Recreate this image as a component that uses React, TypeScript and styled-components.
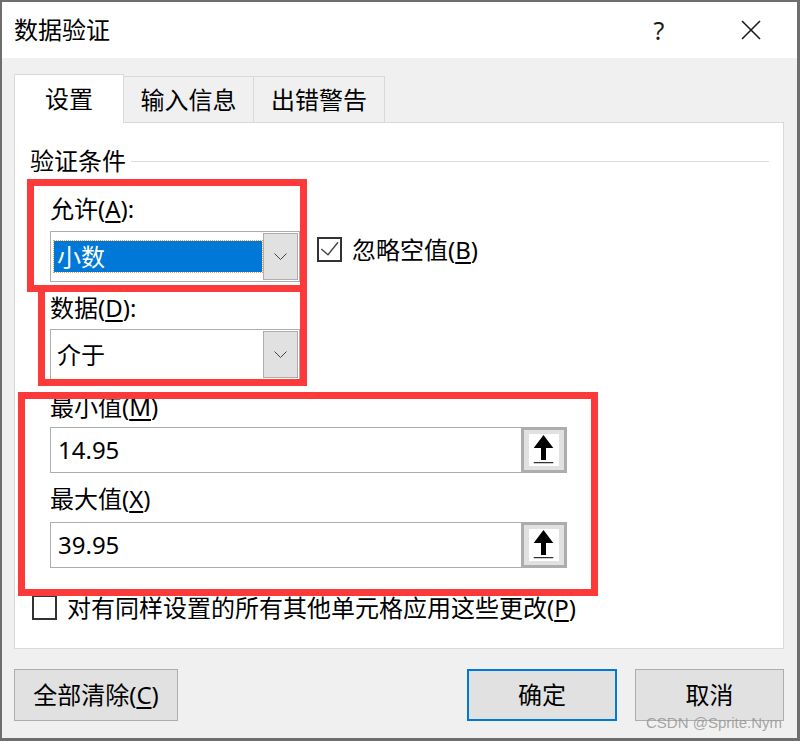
import React from 'react'
import styled, { createGlobalStyle } from 'styled-components'

const GlobalStyle = createGlobalStyle`
  html, body {
    margin: 0;
    padding: 0;
  }
  body {
    background: #6e6e6e;
    font-family: 'Noto Sans', 'Noto Sans CJK SC', sans-serif;
    color: #000;
  }
`

const ChevronIcon = () => (
  <svg width="13" height="7" viewBox="0 0 13 7">
    <polyline points="0.5,0.5 6.5,6.5 12.5,0.5" fill="none" stroke="#444" strokeWidth="1" />
  </svg>
)

const RefArrowIcon = () => (
  <svg width="30" height="32" viewBox="0 0 30 32">
    <polygon points="14.5,1 24.3,14 17,14 17,26 12,26 12,14 4.7,14" fill="#000" />
    <rect x="4.7" y="28.2" width="19.6" height="1" fill="#000" />
  </svg>
)

const CheckIcon = () => (
  <svg width="21" height="21" viewBox="0 0 21 21">
    <polyline points="2.3,10 9,15.7 19,3.3" fill="none" stroke="#444" strokeWidth="1.4" />
  </svg>
)

const CloseIcon = () => (
  <svg width="20" height="20" viewBox="0 0 20 20">
    <line x1="1" y1="1" x2="19" y2="19" stroke="#1a1a1a" strokeWidth="1.6" />
    <line x1="19" y1="1" x2="1" y2="19" stroke="#1a1a1a" strokeWidth="1.6" />
  </svg>
)

const App: React.FC = () => {
  return (
    <Page>
      <GlobalStyle />
      <Dialog>
        <TitleBar>
          <Title>数据验证</Title>
          <TitleButton>?</TitleButton>
          <TitleButton>
            <CloseIcon />
          </TitleButton>
        </TitleBar>
        <Body>
          <TabStrip>
            <Tab $active $w={110}>设置</Tab>
            <Tab $w={131}>输入信息</Tab>
            <Tab $w={132}>出错警告</Tab>
          </TabStrip>
          <Panel>
            <GroupHeader>
              <span>验证条件</span>
              <GroupLine />
            </GroupHeader>
            <Fields>
              <FieldLabel $top={24}>
                允许(<u>A</u>):
              </FieldLabel>
              <ComboRow>
                <Combo>
                  <ComboText $selected>小数</ComboText>
                  <ComboButton>
                    <ChevronIcon />
                  </ComboButton>
                </Combo>
                <CheckRow $top={6}>
                  <CheckBox>
                    <CheckIcon />
                  </CheckBox>
                  <span>
                    忽略空值(<u>B</u>)
                  </span>
                </CheckRow>
              </ComboRow>
              <FieldLabel $top={14}>
                数据(<u>D</u>):
              </FieldLabel>
              <Combo $top={9}>
                <ComboText>介于</ComboText>
                <ComboButton>
                  <ChevronIcon />
                </ComboButton>
              </Combo>
              <FieldLabel $top={15}>
                最小值(<u>M</u>)
              </FieldLabel>
              <TextBox $top={8}>
                <TextValue>14.95</TextValue>
                <RefButton>
                  <RefInner>
                    <RefArrowIcon />
                  </RefInner>
                </RefButton>
              </TextBox>
              <FieldLabel $top={14}>
                最大值(<u>X</u>)
              </FieldLabel>
              <TextBox $top={11}>
                <TextValue>39.95</TextValue>
                <RefButton>
                  <RefInner>
                    <RefArrowIcon />
                  </RefInner>
                </RefButton>
              </TextBox>
            </Fields>
            <ApplyRow>
              <CheckBox />
              <span>
                对有同样设置的所有其他单元格应用这些更改(<u>P</u>)
              </span>
            </ApplyRow>
          </Panel>
          <Footer>
            <DialogButton $w={164}>
              全部清除(<u>C</u>)
            </DialogButton>
            <DialogButton $w={150} $primary>
              确定
            </DialogButton>
            <DialogButton $w={149}>取消</DialogButton>
          </Footer>
        </Body>
      </Dialog>
      <RedFrame $x={27} $y={179} $w={280} $h={113} />
      <RedFrame $x={38} $y={285} $w={269} $h={101} />
      <RedFrame $x={18} $y={392} $w={580} $h={204} />
      <Watermark>CSDN @Sprite.Nym</Watermark>
    </Page>
  )
}

export default App

const Page = styled.div`
  position: relative;
  width: 800px;
  height: 741px;
  overflow: hidden;
  padding: 2px 3px 3px 2px;
  box-sizing: border-box;
`

const Dialog = styled.div`
  width: 795px;
  height: 736px;
  background: #f0f0f0;
  display: flex;
  flex-direction: column;
`

const TitleBar = styled.div`
  height: 56px;
  background: #fff;
  display: flex;
  align-items: center;
  padding-left: 12px;
  font-size: 24px;
  line-height: 24px;
`

const Title = styled.div`
  flex: 1;
`

const TitleButton = styled.div`
  width: 92px;
  height: 56px;
  display: flex;
  align-items: center;
  justify-content: center;
  color: #1a1a1a;
  font-size: 25px;
`

const Body = styled.div`
  display: flex;
  flex-direction: column;
  padding: 0 13px 0 12px;
`

const TabStrip = styled.div`
  margin-top: 16px;
  height: 48px;
  display: flex;
  align-items: flex-end;
`

const Tab = styled.div<{ $active?: boolean; $w: number }>`
  box-sizing: border-box;
  position: relative;
  z-index: ${(p) => (p.$active ? 2 : 1)};
  width: ${(p) => p.$w}px;
  height: ${(p) => (p.$active ? 49 : 46)}px;
  margin-bottom: ${(p) => (p.$active ? -1 : 0)}px;
  border: 1px solid #d9d9d9;
  border-bottom: none;
  background: ${(p) => (p.$active ? '#fff' : '#f0f0f0')};
  display: flex;
  align-items: center;
  justify-content: center;
  font-size: 24px;
  line-height: 24px;
  & + & {
    margin-left: -1px;
  }
`

const Panel = styled.div`
  box-sizing: border-box;
  width: 770px;
  height: 527px;
  border: 1px solid #d9d9d9;
  background: #fff;
  display: flex;
  flex-direction: column;
  font-size: 24px;
  line-height: 24px;
`

const GroupHeader = styled.div`
  margin: 26px 14px 0 15px;
  height: 24px;
  display: flex;
  align-items: center;
  gap: 5px;
`

const GroupLine = styled.div`
  flex: 1;
  height: 1px;
  background: #dcdcdc;
`

const Fields = styled.div`
  display: flex;
  flex-direction: column;
  align-items: flex-start;
  padding-left: 35px;
`

const FieldLabel = styled.div<{ $top: number }>`
  margin-top: ${(p) => p.$top}px;
  height: 24px;
  u {
    text-underline-offset: 3px;
  }
`

const ComboRow = styled.div`
  margin-top: 10px;
  display: flex;
  align-items: flex-start;
  gap: 17px;
`

const Combo = styled.div<{ $top?: number }>`
  box-sizing: border-box;
  margin-top: ${(p) => p.$top ?? 0}px;
  width: 250px;
  height: 51px;
  border: 1px solid #adadad;
  background: #fff;
  padding: 1px;
  display: flex;
`

const ComboText = styled.div<{ $selected?: boolean }>`
  flex: 1;
  margin: 8px 1px 8px 2px;
  padding-left: 3px;
  display: flex;
  align-items: center;
  background: ${(p) => (p.$selected ? '#0078d7' : 'transparent')};
  color: ${(p) => (p.$selected ? '#fff' : '#000')};
  outline: ${(p) => (p.$selected ? '1px dotted #f0a040' : 'none')};
`

const ComboButton = styled.div`
  box-sizing: border-box;
  width: 35px;
  background: #e1e1e1;
  border: 1px solid #adadad;
  display: flex;
  align-items: center;
  justify-content: center;
`

const CheckRow = styled.div<{ $top?: number }>`
  margin-top: ${(p) => p.$top ?? 0}px;
  display: flex;
  align-items: center;
  gap: 10px;
  height: 25px;
  u {
    text-underline-offset: 3px;
  }
`

const CheckBox = styled.div`
  box-sizing: border-box;
  width: 25px;
  height: 25px;
  border: 2px solid #333;
  background: #fff;
  display: flex;
`

const TextBox = styled.div<{ $top: number }>`
  box-sizing: border-box;
  margin-top: ${(p) => p.$top}px;
  width: 517px;
  height: 46px;
  border: 1px solid #adadad;
  background: #fff;
  display: flex;
`

const TextValue = styled.div`
  flex: 1;
  padding-left: 7px;
  display: flex;
  align-items: center;
`

const RefButton = styled.div`
  box-sizing: border-box;
  width: 46px;
  margin: -1px -1px -1px 0;
  border: 3px solid #adadad;
  background: #e1e1e1;
  display: flex;
  align-items: center;
  justify-content: center;
`

const RefInner = styled.div`
  width: 30px;
  height: 32px;
  background: #fff;
  display: flex;
`

const ApplyRow = styled.div`
  margin: 27px 0 0 17px;
  display: flex;
  align-items: center;
  gap: 10px;
  height: 25px;
  u {
    text-underline-offset: 3px;
  }
`

const Footer = styled.div`
  margin-top: 20px;
  display: flex;
  gap: 18px;
`

const DialogButton = styled.div<{ $w: number; $primary?: boolean }>`
  box-sizing: border-box;
  width: ${(p) => p.$w}px;
  height: 52px;
  background: #e1e1e1;
  border: ${(p) => (p.$primary ? '2px solid #0078d7' : '1px solid #adadad')};
  display: flex;
  align-items: center;
  justify-content: center;
  font-size: 24px;
  line-height: 24px;
  &:first-child {
    margin-right: auto;
  }
  u {
    text-underline-offset: 3px;
  }
`

const RedFrame = styled.div<{ $x: number; $y: number; $w: number; $h: number }>`
  position: absolute;
  left: ${(p) => p.$x}px;
  top: ${(p) => p.$y}px;
  width: ${(p) => p.$w}px;
  height: ${(p) => p.$h}px;
  box-sizing: border-box;
  border: 7px solid #fc3a3a;
  pointer-events: none;
`

const Watermark = styled.div`
  position: absolute;
  left: 646px;
  top: 715px;
  font-family: 'Liberation Sans', Arial, sans-serif;
  font-size: 15px;
  line-height: 15px;
  color: rgba(150, 150, 150, 0.85);
  white-space: nowrap;
`
